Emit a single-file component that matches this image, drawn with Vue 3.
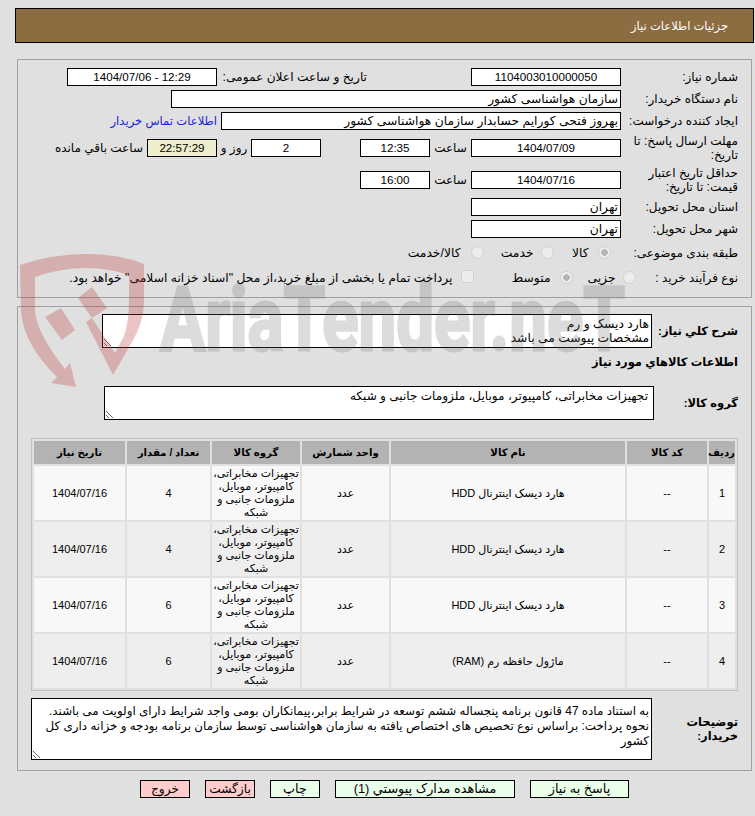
<script setup>
const columns = ['ردیف', 'کد کالا', 'نام کالا', 'واحد شمارش', 'گروه کالا', 'تعداد / مقدار', 'تاریخ نیاز']
const groupLines = ['تجهیزات مخابراتی،', 'کامپیوتر، موبایل،', 'ملزومات جانبی و', 'شبکه']
const rows = [
  { n: 1, name: 'هارد دیسک اینترنال HDD', qty: 4 },
  { n: 2, name: 'هارد دیسک اینترنال HDD', qty: 4 },
  { n: 3, name: 'هارد دیسک اینترنال HDD', qty: 6 },
  { n: 4, name: 'ماژول حافظه رم (RAM)', qty: 6 },
]
</script>

<template>
  <div class="page" dir="rtl">
    <header class="title"><span>جزئیات اطلاعات نیاز</span></header>

    <section class="panel first">
      <div class="row">
        <label class="lab">شماره نیاز:</label>
        <div class="field w150 center num">1104003010000050</div>
        <label class="lab-pub">تاریخ و ساعت اعلان عمومی:</label>
        <div class="field w150 center num" dir="ltr">1404/07/06 - 12:29</div>
      </div>
      <div class="row">
        <label class="lab">نام دستگاه خریدار:</label>
        <div class="field w450 val">سازمان هواشناسی کشور</div>
      </div>
      <div class="row">
        <label class="lab">ایجاد کننده درخواست:</label>
        <div class="field w400 val">بهروز فتحی کورایم حسابدار سازمان هواشناسی کشور</div>
        <a class="contact">اطلاعات تماس خریدار</a>
      </div>
      <div class="row tall">
        <label class="lab">مهلت ارسال پاسخ: تا تاریخ:</label>
        <div class="field w150 center num">1404/07/09</div>
        <span class="hour">ساعت</span>
        <div class="field w70 center num">12:35</div>
        <div class="field w70 center num days">2</div>
        <span class="and">روز و</span>
        <div class="field w70 center num timer">22:57:29</div>
        <span class="left-label">ساعت باقي مانده</span>
      </div>
      <div class="row tall">
        <label class="lab">حداقل تاریخ اعتبار قیمت: تا تاریخ:</label>
        <div class="field w150 center num">1404/07/16</div>
        <span class="hour">ساعت</span>
        <div class="field w70 center num">16:00</div>
      </div>
      <div class="row">
        <label class="lab">استان محل تحویل:</label>
        <div class="field w150 val">تهران</div>
      </div>
      <div class="row">
        <label class="lab">شهر محل تحویل:</label>
        <div class="field w150 val">تهران</div>
      </div>
      <div class="row choice">
        <label class="lab">طبقه بندی موضوعی:</label>
        <input class="rd r1" type="radio" name="cat" checked disabled />
        <span class="opt o1">کالا</span>
        <input class="rd" type="radio" name="cat" disabled />
        <span class="opt o2">خدمت</span>
        <input class="rd" type="radio" name="cat" disabled />
        <span class="opt o3">کالا/خدمت</span>
      </div>
      <div class="row choice">
        <label class="lab">نوع فرآیند خرید :</label>
        <input class="rd r4" type="radio" name="proc" disabled />
        <span class="opt o4">جزیی</span>
        <input class="rd" type="radio" name="proc" checked disabled />
        <span class="opt o5">متوسط</span>
        <input class="cb" type="checkbox" disabled />
        <span class="opt o6">پرداخت تمام یا بخشی از مبلغ خرید،از محل "اسناد خزانه اسلامی" خواهد بود.</span>
      </div>
    </section>

    <section class="panel second">
      <div class="desc-row">
        <label class="lab strong">شرح کلي نیاز:</label>
        <div class="area a1">هارد دیسک و رم<br />مشخصات پیوست می باشد</div>
      </div>
      <h3 class="sub strong">اطلاعات کالاهاي مورد نیاز</h3>
      <div class="group-row">
        <label class="lab strong">گروه کالا:</label>
        <div class="area a2">تجهیزات مخابراتی، کامپیوتر، موبایل، ملزومات جانبی و شبکه</div>
      </div>
      <table class="items">
        <colgroup>
          <col class="c1" /><col class="c2" /><col class="c3" /><col class="c4" /><col class="c5" /><col class="c6" /><col class="c7" />
        </colgroup>
        <thead>
          <tr><th v-for="c in columns" :key="c">{{ c }}</th></tr>
        </thead>
        <tbody>
          <tr v-for="r in rows" :key="r.n">
            <td>{{ r.n }}</td>
            <td>--</td>
            <td>{{ r.name }}</td>
            <td>عدد</td>
            <td class="grp"><div v-for="l in groupLines" :key="l">{{ l }}</div></td>
            <td>{{ r.qty }}</td>
            <td>1404/07/16</td>
          </tr>
        </tbody>
      </table>
      <div class="notes-row">
        <label class="lab strong notes-lab">توضیحات خریدار:</label>
        <div class="area a3">به استناد ماده 47 قانون برنامه پنجساله ششم توسعه در شرایط برابر،پیمانکاران بومی واجد شرایط دارای اولویت می باشند.<br />نحوه پرداخت: براساس نوع تخصیص های اختصاص یافته به سازمان هواشناسی توسط سازمان برنامه بودجه و خزانه داری کل<br />کشور</div>
      </div>
    </section>

    <footer class="actions">
      <button class="btn go b1">پاسخ به نیاز</button>
      <button class="btn go b2">مشاهده مدارک پیوستي (1)</button>
      <button class="btn go b3">چاپ</button>
      <button class="btn stop b3">بازگشت</button>
      <button class="btn stop b3">خروج</button>
    </footer>

    <svg class="mark" viewBox="0 0 755 816" aria-hidden="true">
      <g class="red">
        <path fill-rule="evenodd" d="M20 265 Q52 254 87 254 Q120 254 144 264 L144 300 Q144 322 132 342 L113 375 L86 322 L92 318 L115 353 L124 336 Q129 322 129 300 L129 275 Q108 268 87 268 Q60 268 35 277 L35 312 Q38 335 65 369 L70 363 L76 387 L51 383 L57 377 Q24 345 21 312 Z" />
        <path d="M45 317 L61 308 L75 330 L62 340 Z" />
        <path d="M78 298 L92 287 L107 308 L92 318 Z" />
      </g>
      <text class="gray" x="160" y="350" textLength="465" lengthAdjust="spacingAndGlyphs" direction="ltr">AriaTender.neT</text>
    </svg>
  </div>
</template>

<style scoped>
.page {
  position: relative;
  width: 755px;
  height: 816px;
  overflow: hidden;
  background: #e0e0e0;
  box-sizing: border-box;
  padding: 8px 1px 0 15px;
  font: 12px/14px "Liberation Sans", "DejaVu Sans", sans-serif;
  color: #000;
}
.title {
  height: 35px;
  box-sizing: border-box;
  border: 1px solid #000;
  background: #8c6d42;
  color: #fff;
  font-size: 11.5px;
  display: flex;
  align-items: center;
  padding-right: 25px;
}
.panel {
  box-sizing: border-box;
  margin: 0 2px;
  border: 1px solid #a0a0a0;
  padding-right: 13px;
}
.first {
  margin-top: 16px;
  height: 239px;
  padding-top: 6px;
}
.second {
  margin-top: 8px;
  height: 465px;
  padding-top: 7px;
}
.row {
  display: flex;
  align-items: center;
  height: 22px;
}
.tall { height: 32px; }
.choice { height: 25px; }
.lab {
  flex: none;
  width: 117px;
  box-sizing: border-box;
  padding-left: 4px;
}
.field {
  box-sizing: border-box;
  flex: none;
  height: 18px;
  border: 1px solid #000;
  background: #fff;
  line-height: 16px;
  padding: 0 2px;
  white-space: nowrap;
  overflow: hidden;
}
.num { font-size: 11.6px; }
.val { font-size: 12.3px; }
.center { text-align: center; }
.w150 { width: 150px; }
.w450 { width: 450px; }
.w400 { width: 400px; }
.w70 { width: 70px; }
.lab-pub {
  width: 150px;
  margin-right: 104px;
  flex: none;
  white-space: nowrap;
  font-size: 12.2px;
}
.contact {
  margin-right: 4px;
  color: #2222dd;
  white-space: nowrap;
  font-size: 11.6px;
}
.hour { width: 41px; text-align: center; flex: none; }
.days { margin-right: 39px; }
.and { width: 34px; text-align: center; flex: none; }
.timer { background: #eeeecc; }
.left-label { margin-right: 4px; white-space: nowrap; }
.rd, .cb {
  flex: none;
  margin: 0 0.5px;
  width: 13px;
  height: 13px;
  appearance: none;
  box-sizing: border-box;
  border: 1px solid #d0d0d0;
  background: #ececec;
}
.rd { border-radius: 50%; }
.cb { border-radius: 2px; margin-top: -2px; }
.rd:checked { background: radial-gradient(circle, #b4b4b4 0 3px, #ececec 3.5px); }
.r1 { margin-right: 10px; }
.r4 { margin-right: -15px; }
.opt { white-space: nowrap; flex: none; font-size: 12.3px; box-sizing: border-box; }
.o1 { width: 43px; padding-right: 9px; }
.o2 { width: 56px; padding-right: 7px; }
.o3 { padding-right: 10px; }
.o4 { width: 49px; padding-right: 7px; }
.o5 { width: 85px; padding-right: 9px; }
.o6 { padding-right: 8px; }
.desc-row {
  display: flex;
  align-items: center;
}
.strong { font-weight: 700; font-size: 11.5px; }
.area {
  box-sizing: border-box;
  width: 550px;
  border: 1px solid #000;
  background: #fff;
  padding: 2px;
  overflow: hidden;
  resize: both;
  flex: none;
  font-size: 12.3px;
}
.a1 { height: 34px; margin-right: -31px; }
.sub {
  margin: 7px 0 0;
  height: 14px;
  line-height: 14px;
}
.group-row {
  display: flex;
  align-items: center;
  margin-top: 17px;
}
.a2 { height: 34px; margin-right: -33px; padding-right: 5px; font-size: 12.05px; }
.items {
  table-layout: fixed;
  box-sizing: border-box;
  width: 707px;
  margin: 18px 0 0;
  border: 1px solid #c0c0c0;
  border-spacing: 2px;
  border-collapse: separate;
  font-size: 11px;
}
.c1 { width: 26px; }
.c2 { width: 80px; }
.c3 { width: 234px; }
.c4 { width: 87px; }
.c5 { width: 88px; }
.c6 { width: 83px; }
.c7 { width: 91px; }
.items th {
  height: 23px;
  padding: 0;
  background: #b3b3b3;
  font-weight: 700;
  font-size: 10.2px;
  white-space: nowrap;
}
.items td {
  height: 54px;
  padding: 0;
  text-align: center;
  vertical-align: middle;
  background: #f8f8f8;
}
.items tbody tr:nth-child(even) td { background: #eeeeee; }
.grp { line-height: 13px; white-space: nowrap; }
.notes-row {
  display: flex;
  align-items: center;
  margin-top: 7px;
}
.notes-lab { width: 86px; padding-left: 0; }
.a3 {
  width: 621px;
  height: 62px;
  line-height: 15px;
  padding: 5px 2px 0;
  font-size: 11.9px;
  white-space: nowrap;
}
.actions {
  display: flex;
  margin-top: 9px;
  padding-right: 125px;
  gap: 15px;
}
.btn {
  box-sizing: border-box;
  height: 18px;
  border: 1px solid #000;
  padding: 0;
  font: inherit;
  font-size: 12.8px;
  color: #000;
  white-space: nowrap;
}
.go { background: #eaffea; }
.stop { background: #ffcccc; font-size: 12.2px; }
.b1 { width: 99px; }
.b2 { width: 180px; }
.b3 { width: 50px; }
.mark {
  position: absolute;
  left: 0;
  top: 0;
  width: 755px;
  height: 816px;
  pointer-events: none;
}
.red { fill: rgba(190, 60, 60, 0.3); }
.gray {
  fill: #646464;
  stroke: #646464;
  stroke-width: 3px;
  opacity: 0.22;
  font: 700 89px "Roboto", "DejaVu Sans", sans-serif;
}
</style>
